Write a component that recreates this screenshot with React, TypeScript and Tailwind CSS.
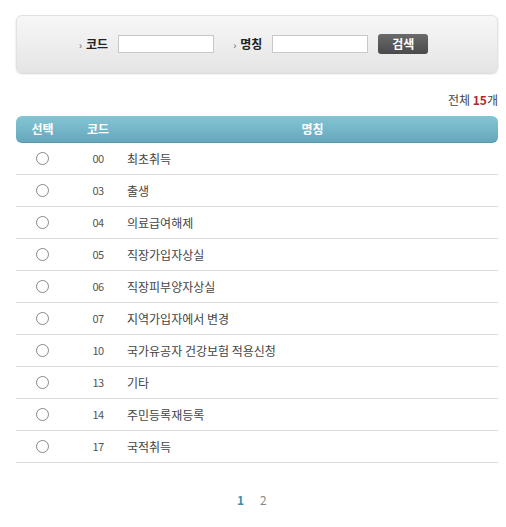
const rows = [
  { code: '00', name: '최초취득' },
  { code: '03', name: '출생' },
  { code: '04', name: '의료급여해제' },
  { code: '05', name: '직장가입자상실' },
  { code: '06', name: '직장피부양자상실' },
  { code: '07', name: '지역가입자에서 변경' },
  { code: '10', name: '국가유공자 건강보험 적용신청' },
  { code: '13', name: '기타' },
  { code: '14', name: '주민등록재등록' },
  { code: '17', name: '국적취득' },
]

const font = { fontFamily: '"Noto Sans CJK KR", "Liberation Sans", sans-serif' }

export default function App() {
  return (
    <div className="w-[506px] h-[527px] bg-white text-[12px] text-[#333]" style={font}>
      <div className="pt-[15px] pl-4 pr-2">
        <div className="h-[58px] rounded-md bg-gradient-to-b from-[#f7f7f7] to-[#e5e5e5] shadow-[0_1px_2px_rgba(0,0,0,0.18)] border border-[#e2e2e2] flex items-center pl-[62px]">
          <span className="text-[#666] text-[10px] mr-1">›</span>
          <span className="font-bold text-[#222] mr-[10px]">코드</span>
          <input className="w-[96px] h-[18px] bg-white border border-[#c8c8c8] outline-none" />
          <span className="text-[#666] text-[10px] ml-[19px] mr-1">›</span>
          <span className="font-bold text-[#222] mr-[10px]">명칭</span>
          <input className="w-[96px] h-[18px] bg-white border border-[#c8c8c8] outline-none" />
          <button className="ml-[10px] w-[50px] h-[20px] rounded-[3px] bg-gradient-to-b from-[#6a6a6a] to-[#4a4a4a] text-white font-bold text-[12px] leading-[20px]">
            검색
          </button>
        </div>

        <div className="mt-[17px] flex justify-end text-[12px] text-[#444] leading-[20px]">
          전체&nbsp;<b className="text-[#b5282a]">15</b>개
        </div>

        <div className="mt-[6px] h-[27px] rounded-md bg-gradient-to-b from-[#84c5d4] to-[#66a7bd] border-b border-[#5a97ad] flex items-center text-white font-bold text-[12px]">
          <div className="w-[53px] text-center">선택</div>
          <div className="w-[58px] text-center">코드</div>
          <div className="flex-1 text-center">명칭</div>
        </div>

        {rows.map((r) => (
          <div key={r.code} className="h-[32px] border-b border-[#dcdcdc] flex items-center text-[12px] text-[#444]">
            <div className="w-[53px] flex justify-center">
              <span className="w-[13px] h-[13px] rounded-full border border-[#888] bg-white" />
            </div>
            <div className="w-[58px] text-center text-[11px] text-[#555] tracking-[-0.5px]">{r.code}</div>
            <div className="flex-1">{r.name}</div>
          </div>
        ))}

        <div className="mt-[28px] flex gap-[16px] text-[12px] pl-[221px]">
          <span className="text-[#3b8fb0] font-bold">1</span>
          <span className="text-[#888]">2</span>
        </div>
      </div>
    </div>
  )
}
